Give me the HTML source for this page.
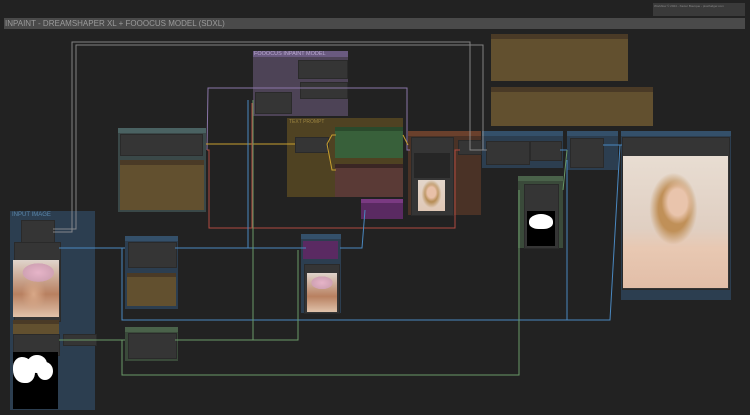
<!DOCTYPE html>
<html><head><style>
body{margin:0;width:750px;height:415px;background:#222;position:relative;overflow:hidden;font-family:"Liberation Sans",sans-serif}
.a{position:absolute;box-sizing:border-box}
.g{position:absolute;box-sizing:border-box;font-size:5px;padding:1px 2px;}
.n{position:absolute;background:#353535;border:1px solid #2a2a2a}
</style></head><body>
<div class="a" style="left:653px;top:3px;width:92px;height:13px;background:#3a3a3a;font-size:3px;color:#888;padding:1px">Workflow © 2024 - Xavier Bourque - pixelfudger.com</div>
<div class="a" style="left:4px;top:18px;width:741px;height:11px;background:#4a4a4a;color:#9a9a9a;font-size:8px;line-height:11px;padding-left:1px">INPAINT - DREAMSHAPER XL + FOOOCUS MODEL (SDXL)</div>

<div class="a" style="left:491px;top:34px;width:137px;height:47px;background:#62502f;border-top:5px solid #4a3a26"></div>
<div class="a" style="left:491px;top:87px;width:162px;height:39px;background:#62502f;border-top:5px solid #4a3a26"></div>

<div class="g" style="left:253px;top:51px;width:95px;height:65px;background:#4d4356;color:#b9a8d0;border-top:6px solid #6a5a80"><span style="position:absolute;top:-6px;left:1px;font-size:5.5px">FOOOCUS INPAINT MODEL</span></div>
<div class="n" style="left:298px;top:60px;width:48px;height:17px"></div>
<div class="n" style="left:300px;top:82px;width:46px;height:15px"></div>
<div class="n" style="left:255px;top:92px;width:35px;height:20px"></div>

<div class="g" style="left:287px;top:118px;width:116px;height:79px;background:#4f4222;color:#9c8440">TEXT PROMPT</div>
<div class="n" style="left:295px;top:137px;width:32px;height:14px"></div>
<div class="a" style="left:335px;top:127px;width:68px;height:31px;background:#38603a;border-top:4px solid #2a4a2c"></div>
<div class="a" style="left:335px;top:164px;width:68px;height:33px;background:#5a3a36;border-top:4px solid #3a2624"></div>
<div class="a" style="left:361px;top:199px;width:42px;height:20px;background:#5a2a62;border-top:4px solid #7a3a82"></div>

<div class="g" style="left:118px;top:128px;width:88px;height:84px;background:#3a4848;color:#8aa;border-top:5px solid #4a6262"></div>
<div class="n" style="left:120px;top:134px;width:81px;height:20px"></div>
<div class="a" style="left:120px;top:160px;width:84px;height:50px;background:#62502f;border-top:5px solid #4a3a26"></div>

<div class="g" style="left:408px;top:131px;width:73px;height:84px;background:#4a3226;color:#c07040;border-top:5px solid #6a402c"></div>
<div class="n" style="left:411px;top:137px;width:41px;height:77px"></div>
<div class="a" style="left:414px;top:153px;width:36px;height:25px;background:#262626"></div>
<div class="n" style="left:458px;top:140px;width:22px;height:13px"></div>
<div class="a" style="left:418px;top:180px;width:27px;height:31px;background:radial-gradient(ellipse 7px 9px at 50% 40%,#e8c0a8 60%,transparent),radial-gradient(ellipse 10px 14px at 50% 45%,#b8905a 60%,transparent),linear-gradient(#e3d6cb,#e0c8b6)"></div>

<div class="g" style="left:482px;top:131px;width:81px;height:37px;background:#2c3e50;border-top:5px solid #34506a"></div>
<div class="n" style="left:486px;top:141px;width:42px;height:22px"></div>
<div class="n" style="left:530px;top:141px;width:30px;height:18px"></div>
<div class="g" style="left:567px;top:131px;width:51px;height:39px;background:#2c3e50;border-top:5px solid #34506a"></div>
<div class="n" style="left:570px;top:138px;width:32px;height:28px"></div>
<div class="g" style="left:621px;top:131px;width:110px;height:169px;background:#2c3e50;border-top:5px solid #34506a"></div>
<div class="n" style="left:622px;top:137px;width:106px;height:151px"></div>
<div class="a" style="left:623px;top:156px;width:105px;height:132px;background:radial-gradient(ellipse 16px 22px at 52% 35%,#e9c4ac 60%,transparent 100%),radial-gradient(ellipse 30px 45px at 48% 40%,#c09058 50%,transparent 80%),linear-gradient(#e8ddd2,#e0cfc2 55%,#e8c8b2 70%,#e2bea8)"></div>

<div class="g" style="left:518px;top:176px;width:45px;height:72px;background:#3a4a3a;border-top:5px solid #4a624a"></div>
<div class="n" style="left:524px;top:184px;width:33px;height:63px"></div>
<div class="a" style="left:527px;top:211px;width:28px;height:35px;background:#000"><div class="a" style="left:2px;top:3px;width:24px;height:15px;background:#fff;border-radius:50% 50% 40% 40%"></div></div>

<div class="g" style="left:10px;top:211px;width:85px;height:199px;background:#2c3e50;color:#5a86aa;font-size:6px">INPUT IMAGE</div>
<div class="n" style="left:21px;top:220px;width:32px;height:22px"></div>
<div class="n" style="left:14px;top:242px;width:45px;height:78px"></div>
<div class="a" style="left:13px;top:260px;width:46px;height:57px;background:radial-gradient(ellipse 22px 13px at 55% 22%,#e6b4c8,#d0a2b4 70%,transparent 72%),radial-gradient(ellipse 12px 18px at 45% 60%,#d8a888,transparent),linear-gradient(#e0d4cc,#b88060 60%,#e0c2aa)"></div>
<div class="a" style="left:13px;top:320px;width:46px;height:14px;background:#62502f;border-top:4px solid #4a3a26"></div>
<div class="n" style="left:13px;top:334px;width:45px;height:20px"></div>
<div class="n" style="left:63px;top:334px;width:32px;height:10px"></div>
<div class="a" style="left:13px;top:352px;width:45px;height:57px;background:#000"><div class="a" style="left:0px;top:5px;width:22px;height:26px;background:#fff;border-radius:40% 60% 40% 50%"></div><div class="a" style="left:14px;top:3px;width:20px;height:18px;background:#fff;border-radius:50%"></div><div class="a" style="left:24px;top:10px;width:16px;height:18px;background:#fff;border-radius:50%"></div></div>

<div class="g" style="left:125px;top:236px;width:53px;height:73px;background:#2c3e50;border-top:5px solid #34506a"></div>
<div class="n" style="left:128px;top:242px;width:47px;height:24px"></div>
<div class="a" style="left:127px;top:273px;width:49px;height:33px;background:#62502f;border-top:4px solid #4a3a26"></div>
<div class="g" style="left:125px;top:327px;width:53px;height:34px;background:#3a4a3a;border-top:5px solid #4a624a"></div>
<div class="n" style="left:128px;top:333px;width:47px;height:24px"></div>

<div class="g" style="left:301px;top:234px;width:40px;height:79px;background:#2c3e50;border-top:5px solid #34506a"></div>
<div class="a" style="left:303px;top:241px;width:35px;height:18px;background:#5a2a62"></div>
<div class="n" style="left:304px;top:264px;width:34px;height:48px"></div>
<div class="a" style="left:307px;top:273px;width:30px;height:39px;background:radial-gradient(ellipse 15px 9px at 50% 25%,#e6b4c8,#d0a2b4 70%,transparent 72%),linear-gradient(#e0d4cc,#b88060 60%,#e0c2aa)"></div>

<svg class="a" style="left:0;top:0" width="750" height="415" fill="none" stroke-width="1">
<g stroke="#9a9a9a" opacity=".8"><polyline points="53,232 72,232 72,42 470,42 470,150 487,150"/><polyline points="53,229 76,229 76,45 483,45 483,150"/></g>
<g stroke="#8a76a8"><polyline points="207,150 208,88 405,88 407,88 407,150 410,150"/></g>
<g stroke="#c8a030"><polyline points="206,144 295,144"/><polyline points="327,144 332,135 336,135"/><polyline points="327,144 332,170 336,170"/><polyline points="403,135 408,145"/></g>
<g stroke="#b04a40"><polyline points="207,150 209,150 209,228 455,228 455,150 460,150"/><polyline points="252,103 252,228"/></g>
<g stroke="#4a88c0"><polyline points="59,248 125,248"/><polyline points="175,248 306,248"/><polyline points="248,100 248,248"/><polyline points="122,248 122,320 610,320 620,145"/><polyline points="560,150 567,150"/><polyline points="603,145 622,145"/><polyline points="525,320 567,320 567,160"/><polyline points="340,248 362,248 365,210"/></g>
<g stroke="#6a9a68"><polyline points="59,340 125,340"/><polyline points="175,340 298,340 298,250"/><polyline points="122,340 122,375 519,375 519,190"/><polyline points="253,100 253,340"/><polyline points="563,190 567,150"/></g>
</svg>
</body></html>
